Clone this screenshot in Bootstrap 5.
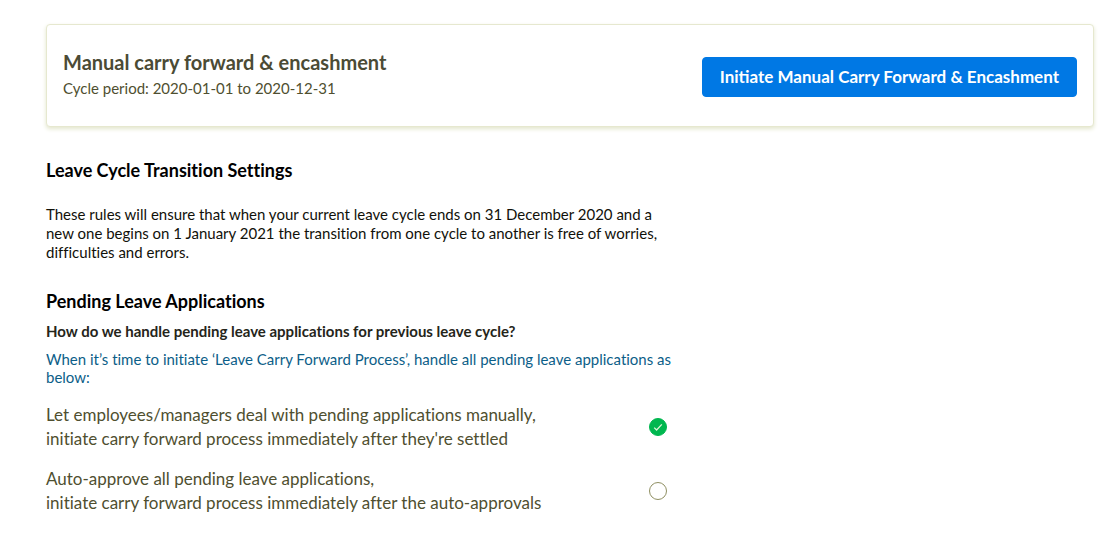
<!DOCTYPE html>
<html lang="en">
<head>
<meta charset="utf-8">
<meta name="viewport" content="width=device-width, initial-scale=1">
<title>Leave Cycle Transition Settings</title>
<link href="https://cdn.jsdelivr.net/npm/bootstrap@5.3.0/dist/css/bootstrap.min.css" rel="stylesheet">
<style>
  body { font-family: Lato, "Open Sans", sans-serif; font-variant-ligatures: none; color: #000; background: #fff; }
  .page { padding: 24px 6px 24px 46px; }
  .cycle-card { border: 1px solid #e6e8cf; border-radius: 4px; box-shadow: 0 2px 4px #e3e6cc; }
  .cycle-card .card-body { padding: 24px 16px 25px; }
  .cycle-title { font-size: 20px; line-height: 26px; font-weight: 700; color: #4b4b35; }
  .cycle-period { font-size: 15px; line-height: 26px; color: #4f4f30; }
  .btn-initiate {
    --bs-btn-color: #fff; --bs-btn-bg: #0078e4; --bs-btn-border-color: #0078e4;
    --bs-btn-hover-color: #fff; --bs-btn-hover-bg: #0069c8; --bs-btn-hover-border-color: #0069c8;
    --bs-btn-padding-y: 7px; --bs-btn-padding-x: 17px;
    --bs-btn-font-size: 17px; --bs-btn-font-weight: 700; --bs-btn-line-height: 24px;
    --bs-btn-border-radius: 4px;
  }
  .settings { max-width: 637px; margin-top: 31px; }
  .section-title { font-size: 18px; line-height: 24px; font-weight: 700; }
  .intro { font-size: 15px; line-height: 19px; color: #11110a; margin: 23px 0 27px; }
  .question { font-size: 15px; line-height: 20px; font-weight: 700; color: #25251a; margin: 8px 0; }
  .hint { font-size: 15px; line-height: 18px; color: #0c5e88; margin: 9px 0 17px; }
  .choice { font-size: 17px; line-height: 24px; color: #4f4f30; }
  .choice .form-check-input { width: 18px; height: 18px; border-color: #8f8f62; }
  .choice .form-check-input:checked {
    background-color: #00b74f; border-color: #00b74f;
    background-image: url("data:image/svg+xml,%3Csvg xmlns='http://www.w3.org/2000/svg' viewBox='0 0 16 16'%3E%3Cpath d='M4.2 8.6l2.4 2.4 5.2-5.6' fill='none' stroke='%23d9f5d5' stroke-width='1.3'/%3E%3C/svg%3E");
  }
</style>
</head>
<body>
<main class="page">
  <section class="card cycle-card">
    <div class="card-body d-flex flex-wrap align-items-center justify-content-between gap-3">
      <div>
        <h1 class="cycle-title m-0">Manual carry forward &amp; encashment</h1>
        <p class="cycle-period m-0">Cycle period: 2020-01-01 to 2020-12-31</p>
      </div>
      <button type="button" class="btn btn-initiate mt-1">Initiate Manual Carry Forward &amp; Encashment</button>
    </div>
  </section>

  <div class="settings">
    <h2 class="section-title m-0">Leave Cycle Transition Settings</h2>
    <p class="intro">These rules will ensure that when your current leave cycle ends on 31 December 2020 and a new one begins on 1 January 2021 the transition from one cycle to another is free of worries, difficulties and errors.</p>

    <section>
      <h2 class="section-title m-0">Pending Leave Applications</h2>
      <h3 class="question" id="pending-question">How do we handle pending leave applications for previous leave cycle?</h3>
      <p class="hint">When it’s time to initiate ‘Leave Carry Forward Process’, handle all pending leave applications as below:</p>

      <div class="d-flex flex-column gap-3" role="radiogroup" aria-labelledby="pending-question">
        <div class="choice d-flex align-items-center justify-content-between pe-3">
          <label for="manual">Let employees/managers deal with pending applications manually,<br>initiate carry forward process immediately after they're settled</label>
          <input class="form-check-input m-0 flex-shrink-0" type="radio" name="pending" id="manual" checked>
        </div>
        <div class="choice d-flex align-items-center justify-content-between pe-3">
          <label for="auto">Auto-approve all pending leave applications,<br>initiate carry forward process immediately after the auto-approvals</label>
          <input class="form-check-input m-0 flex-shrink-0" type="radio" name="pending" id="auto">
        </div>
      </div>
    </section>
  </div>
</main>
<script src="https://cdn.jsdelivr.net/npm/bootstrap@5.3.0/dist/js/bootstrap.bundle.min.js"></script>
</body>
</html>
